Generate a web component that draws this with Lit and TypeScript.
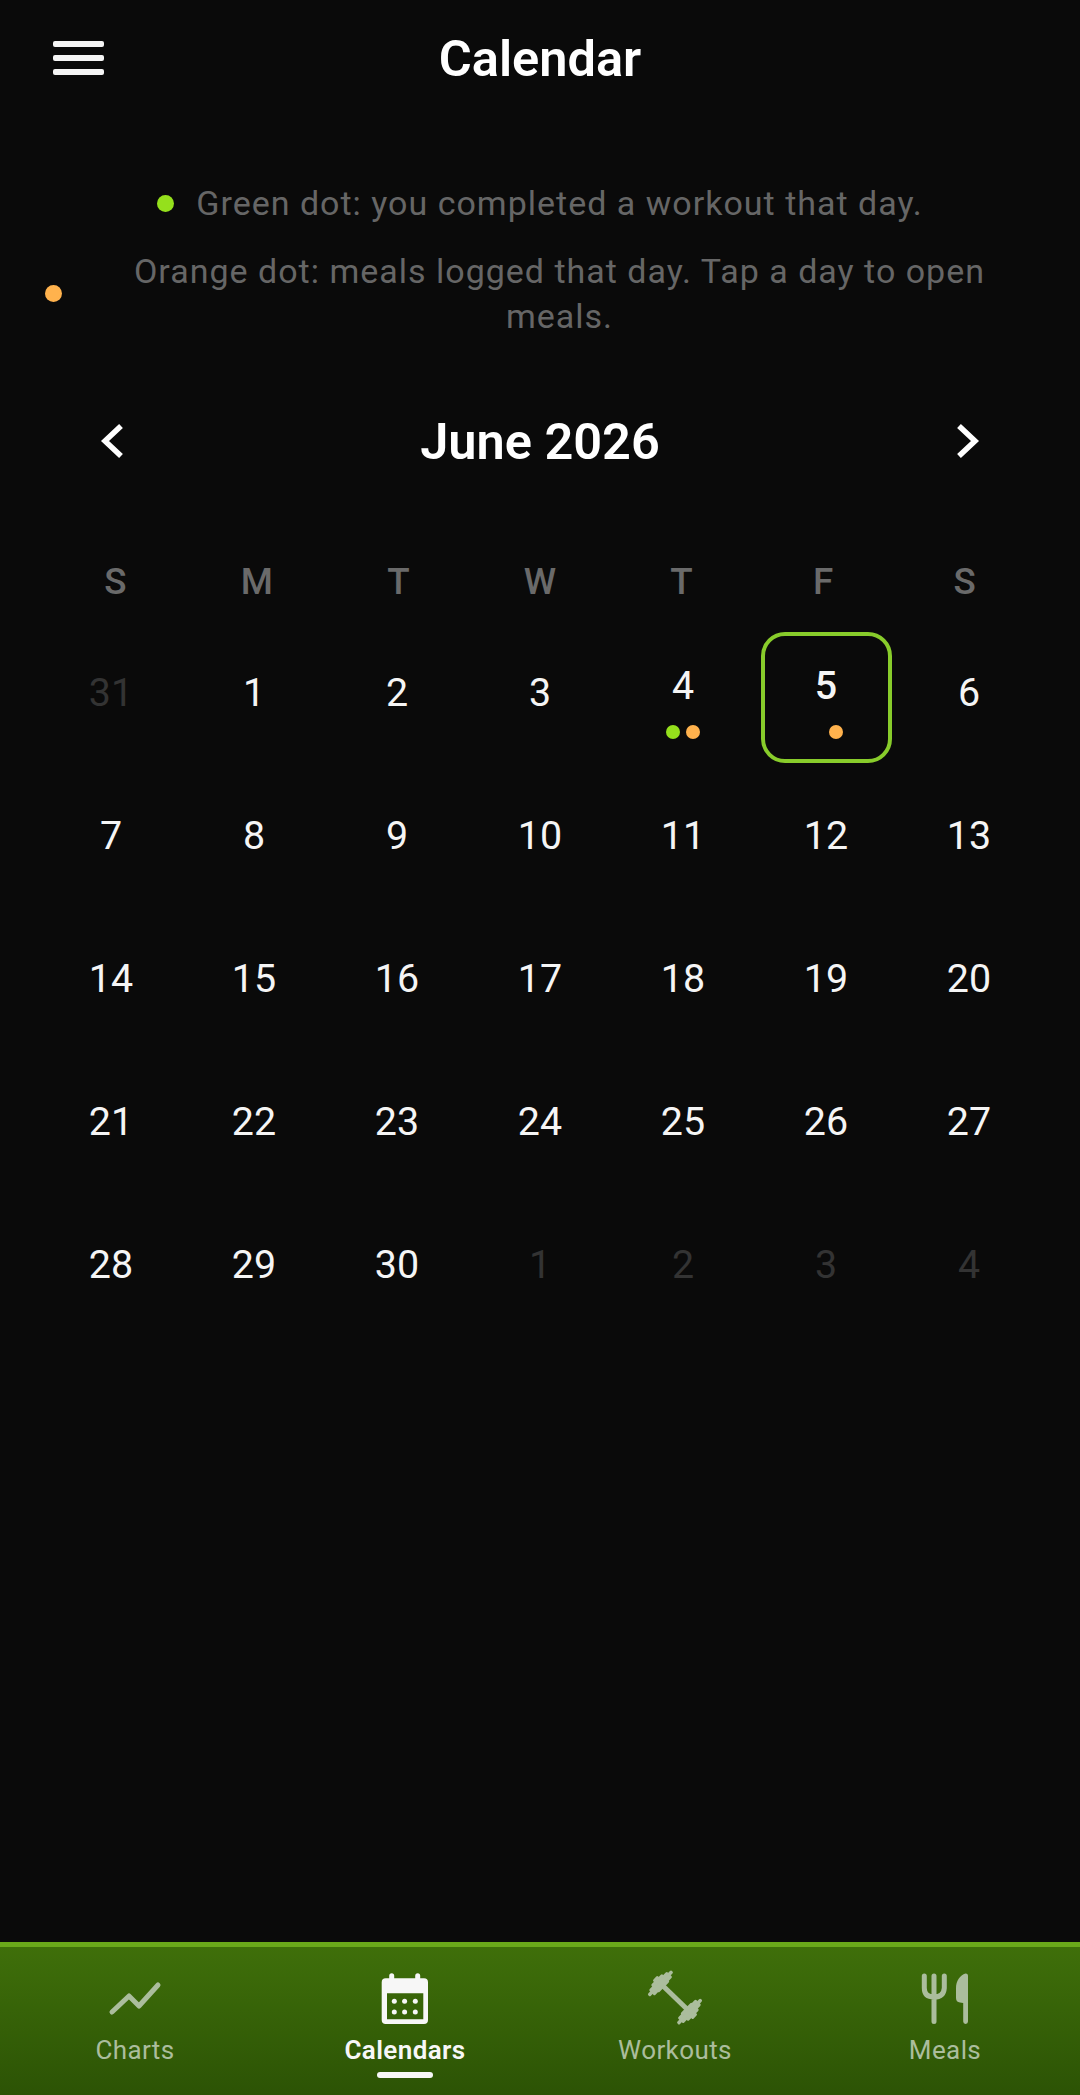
import { LitElement, html, css, svg } from "lit";
import { customElement } from "lit/decorators.js";
import { classMap } from "lit/directives/class-map.js";

type Day = { n: number; muted?: boolean; green?: boolean; orange?: boolean; selected?: boolean };

const weekdays = ["S", "M", "T", "W", "T", "F", "S"];

const days: Day[] = [
  { n: 31, muted: true },
  ...Array.from({ length: 30 }, (_, i): Day => ({ n: i + 1 })),
  { n: 1, muted: true },
  { n: 2, muted: true },
  { n: 3, muted: true },
  { n: 4, muted: true },
];
days[4] = { n: 4, green: true, orange: true };
days[5] = { n: 5, orange: true, selected: true };

const icons = {
  charts: svg`<path d="M22 52 39 36 49 46 68 25" fill="none" stroke="currentColor" stroke-width="5" stroke-linecap="round" stroke-linejoin="round"/>`,
  calendars: svg`<path fill="currentColor" fill-rule="evenodd" d="M29.200 18.300v-2.500a2.500 2.500 0 0 1 5 0v2.500h21v-2.500a2.500 2.500 0 0 1 5 0v2.500h3.800a4 4 0 0 1 4 4V60a4 4 0 0 1-4 4H25.700a4 4 0 0 1-4-4V22.300a4 4 0 0 1 4-4ZM27 33.300v26h36.300v-26Z"/>
    <g fill="currentColor">
      <circle cx="34.300" cy="41.300" r="2.500"/><circle cx="44.600" cy="41.300" r="2.500"/><circle cx="55.300" cy="41.300" r="2.500"/>
      <circle cx="34.300" cy="52" r="2.500"/><circle cx="44.600" cy="52" r="2.500"/><circle cx="55.300" cy="52" r="2.500"/>
    </g>`,
  workouts: svg`<g fill="currentColor" transform="translate(45 37.500) rotate(44)">
      <rect x="-18" y="-2.500" width="36" height="5"/>
      <rect x="-26" y="-8" width="11" height="16" rx="1.500"/>
      <rect x="-24" y="-13" width="8" height="26" rx="1.500"/>
      <rect x="-28" y="-3.500" width="4" height="7" rx="1.500"/>
      <rect x="-22" y="-17" width="3.500" height="34" rx="1.500"/>
      <rect x="15" y="-8" width="11" height="16" rx="1.500"/>
      <rect x="16" y="-13" width="8" height="26" rx="1.500"/>
      <rect x="24" y="-3.500" width="4" height="7" rx="1.500"/>
      <rect x="18.500" y="-17" width="3.500" height="34" rx="1.500"/>
    </g>`,
  meals: svg`<path d="M24.300 16v12q0 9 9.700 9t10.300-9V16M34 16v45.500" fill="none" stroke="currentColor" stroke-width="5" stroke-linecap="round"/>
    <path fill="currentColor" d="M65.500 13.500C60 15 56 21 56 28v10q0 4 4 4.500l3.200.5v18.500a2.400 2.400 0 0 0 4.800 0V16a2.400 2.400 0 0 0-2.500-2.500Z"/>`,
};

const tabs = [
  { label: "Charts", icon: icons.charts },
  { label: "Calendars", icon: icons.calendars, active: true },
  { label: "Workouts", icon: icons.workouts },
  { label: "Meals", icon: icons.meals },
];

@customElement("app-root")
export class AppRoot extends LitElement {
  static styles = css`
    :host {
      display: flex;
      flex-direction: column;
      height: 2095px;
      background: #0a0a0a;
      color: #fff;
      font-family: Roboto, "Noto Sans", sans-serif;
    }

    .header {
      height: 116px;
      padding-left: 53px;
      display: flex;
      align-items: center;
      position: relative;
    }
    .burger {
      width: 51px;
      display: flex;
      flex-direction: column;
      gap: 8px;
    }
    .burger span {
      height: 6px;
      border-radius: 2px;
      background: #f5f5f5;
    }
    .title {
      position: absolute;
      left: 0;
      right: 0;
      padding-top: 2px;
      text-align: center;
      font-size: 50.500px;
      font-weight: 600;
      line-height: 60px;
    }

    /* legenda */
    .legend {
      margin-top: 64.500px;
      padding: 0 45px;
      display: flex;
      flex-direction: column;
      gap: 23px;
      color: #666;
      font-size: 34px;
      line-height: 45px;
      letter-spacing: 1px;
    }
    .legend-row {
      display: flex;
      justify-content: center;
      align-items: center;
      gap: 22px;
      text-align: center;
    }
    .legend-row .dot {
      width: 17px;
      height: 17px;
      flex: none;
    }

    .dot {
      width: 14px;
      height: 14px;
      border-radius: 50%;
    }
    .green { background: #95e01c; }
    .orange { background: #ffb24d; }
    .clear { background: transparent; }

    .month {
      margin-top: 72.500px;
      height: 60px;
      padding: 0 82px;
      display: flex;
      justify-content: space-between;
      align-items: center;
    }
    .month h2 {
      margin: 0;
      font-size: 50.500px;
      font-weight: 600;
    }
    .month svg {
      width: 60px;
      height: 60px;
      display: block;
    }

    .weekdays {
      margin-top: 91px;
      padding: 0 44.500px;
      display: grid;
      grid-template-columns: repeat(7, 1fr);
      text-align: center;
      color: #6a6a6a;
      font-size: 36.750px;
      font-weight: 500;
      line-height: 40px;
    }

    .days {
      margin-top: 18.500px;
      padding: 0 39.500px;
      display: grid;
      grid-template-columns: repeat(7, 1fr);
      grid-auto-rows: 143px;
    }
    .cell {
      padding-top: 11px;
      display: flex;
      justify-content: center;
      align-items: flex-start;
    }
    .day {
      box-sizing: border-box;
      width: 131px;
      height: 131px;
      padding-top: 37px;
      display: flex;
      flex-direction: column;
      align-items: center;
      border: 4px solid transparent;
      border-radius: 24px;
      color: #f5f5f5;
      font-size: 39.400px;
      font-weight: 400;
      line-height: 40px;
    }
    .day.marked { padding-top: 30px; }
    .day.selected {
      border-color: #88cc2b;
      font-weight: 500;
    }
    .day.muted { color: #333; }
    .marks {
      margin-top: 19px;
      display: flex;
      gap: 6px;
    }

    .nav {
      margin-top: auto;
      box-sizing: border-box;
      height: 153px;
      padding-top: 13px;
      display: grid;
      grid-template-columns: repeat(4, 1fr);
      border-top: 5px solid #6aa81a;
      background: linear-gradient(#3f6f0a, #2c5305);
    }
    .tab {
      display: flex;
      flex-direction: column;
      align-items: center;
      color: #abbd9d;
      font-size: 26px;
      line-height: 30px;
      letter-spacing: 0.400px;
    }
    .tab svg {
      width: 90px;
      height: 75px;
      display: block;
    }
    .tab.active {
      color: #f7f7f7;
      font-weight: 600;
    }
    .bar {
      width: 56px;
      height: 6px;
      margin-top: 7px;
      border-radius: 3px;
      background: #f7f7f7;
    }
  `;

  renderDay(d: Day) {
    const marked = d.green || d.orange;
    return html`<div class="cell">
      <div class=${classMap({ day: true, marked: !!marked, muted: !!d.muted, selected: !!d.selected })}>
        <span>${d.n}</span>
        ${marked
          ? html`<div class="marks">
              <div class="dot ${d.green ? "green" : "clear"}"></div>
              <div class="dot ${d.orange ? "orange" : "clear"}"></div>
            </div>`
          : ""}
      </div>
    </div>`;
  }

  render() {
    return html`
      <div class="header">
        <div class="burger"><span></span><span></span><span></span></div>
        <div class="title">Calendar</div>
      </div>

      <div class="legend">
        <div class="legend-row">
          <div class="dot green"></div>
          <div>Green dot: you completed a workout that day.</div>
        </div>
        <div class="legend-row">
          <div class="dot orange"></div>
          <div>Orange dot: meals logged that day. Tap a day to open meals.</div>
        </div>
      </div>

      <div class="month">
        <svg viewBox="0 0 60 60"><path d="M39 15 23 30l16 15" fill="none" stroke="#fff" stroke-width="5.500"/></svg>
        <h2>June 2026</h2>
        <svg viewBox="0 0 60 60"><path d="M21 15l16 15-16 15" fill="none" stroke="#fff" stroke-width="5.500"/></svg>
      </div>

      <div class="weekdays">${weekdays.map((w) => html`<div>${w}</div>`)}</div>
      <div class="days">${days.map((d) => this.renderDay(d))}</div>

      <div class="nav">
        ${tabs.map(
          (t) => html`<div class="tab ${t.active ? "active" : ""}">
            <svg viewBox="0 0 90 75">${t.icon}</svg>
            <span>${t.label}</span>
            ${t.active ? html`<div class="bar"></div>` : ""}
          </div>`
        )}
      </div>
    `;
  }
}
